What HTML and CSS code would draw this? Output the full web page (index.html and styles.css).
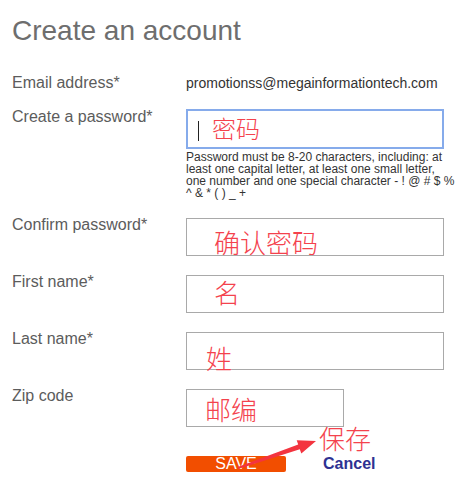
FILE: index.html
```html
<!DOCTYPE html>
<html>
<head>
<meta charset="utf-8">
<link rel="stylesheet" href="styles.css">
</head>
<body>
<div class="page">
  <h1 class="title">Create an account</h1>
  <div class="form">
    <div class="row row-email">
      <div class="label">Email address*</div>
      <div class="value">promotionss@megainformationtech.com</div>
    </div>
    <div class="row">
      <div class="label label-pw">Create a password*</div>
      <div class="field">
        <div class="input input-focus"><span class="caret"></span><span class="note note-pw">密码</span></div>
        <p class="help">Password must be 8-20 characters, including: at least one capital letter, at least one small letter, one number and one special character - ! @ # $ % ^ &amp; * ( ) _ +</p>
      </div>
    </div>
    <div class="row">
      <div class="label">Confirm password*</div>
      <div class="field">
        <div class="input"><span class="note note-confirm">确认密码</span></div>
      </div>
    </div>
    <div class="row">
      <div class="label">First name*</div>
      <div class="field">
        <div class="input"><span class="note note-first">名</span></div>
      </div>
    </div>
    <div class="row">
      <div class="label">Last name*</div>
      <div class="field">
        <div class="input"><span class="note note-last">姓</span></div>
      </div>
    </div>
    <div class="row">
      <div class="label">Zip code</div>
      <div class="field">
        <div class="input input-zip"><span class="note note-zip">邮编</span></div>
      </div>
    </div>
    <div class="row row-actions">
      <div class="label"></div>
      <div class="actions">
        <span class="btn-save">SAVE</span>
        <span class="btn-cancel">Cancel</span>
      </div>
    </div>
  </div>
  <span class="note note-save">保存</span>
  <svg class="arrow" width="82" height="36" viewBox="0 0 82 36">
    <polygon points="1.7,31 62.2,8.5 60.7,4.3 80,5 65.3,17.5 63.8,13.3 2.3,33" fill="#f3343f"/>
  </svg>
</div>
</body>
</html>
```

FILE: styles.css
```css
html, body {
  margin: 0;
  padding: 0;
  background: #ffffff;
}

.page {
  position: relative;
  width: 462px;
  height: 488px;
  padding-left: 12px;
  box-sizing: border-box;
  font-family: "Liberation Sans", Arial, sans-serif;
  overflow: hidden;
}

.title {
  margin: 15px 0 0 0;
  font-size: 28px;
  line-height: 32px;
  font-weight: normal;
  color: #6e6e6e;
}

.form {
  margin-top: 28px;
  display: flex;
  flex-direction: column;
  gap: 19px;
}

.row {
  display: flex;
  align-items: flex-start;
}

.row-email {
  margin-bottom: -1px;
  align-items: baseline;
}

.label {
  width: 174px;
  flex: none;
  font-size: 16px;
  line-height: 18px;
  color: #5c5c5c;
  margin-top: -2px;
}

.row-email .label {
  line-height: 15px;
  margin-top: 0;
}

.label-pw {
  margin-top: -1px;
}

.value {
  font-size: 14px;
  line-height: 15px;
  color: #333333;
}

.field {
  display: flex;
  flex-direction: column;
}

.input {
  position: relative;
  box-sizing: border-box;
  width: 258px;
  height: 38px;
  border: 1px solid #a9a9a9;
  background: #ffffff;
}

.input-focus {
  height: 40px;
  border: 2px solid #86abeb;
}

.input-zip {
  width: 158px;
}

.caret {
  position: absolute;
  left: 10px;
  top: 10px;
  width: 1px;
  height: 20px;
  background: #222222;
}

.help {
  margin: 2px 0 0 0;
  width: 270px;
  font-size: 12px;
  line-height: 12px;
  color: #333333;
}

.row-actions {
  margin-top: 10px;
}

.actions {
  display: flex;
  align-items: center;
}

.btn-save {
  display: block;
  width: 100px;
  height: 16px;
  line-height: 16px;
  border-radius: 2px;
  background: #f24e00;
  color: #ffffff;
  font-size: 16px;
  text-align: center;
}

.btn-cancel {
  margin-left: 37px;
  font-size: 16px;
  line-height: 16px;
  font-weight: bold;
  color: #2e3192;
}

.note {
  position: absolute;
  font-family: "Noto Sans CJK SC", sans-serif;
  font-weight: 300;
  font-size: 26px;
  line-height: 26px;
  color: #f4424d;
  white-space: nowrap;
}

.note-pw {
  font-size: 24px;
  line-height: 24px;
  left: 24px;
  top: 5px;
}

.note-confirm {
  left: 27px;
  top: 10px;
}

.note-first {
  left: 27px;
  top: 3px;
}

.note-last {
  left: 19px;
  top: 12px;
}

.note-zip {
  left: 18px;
  top: 6px;
}

.note-save {
  left: 319px;
  top: 428px;
  line-height: 20px;
}

.arrow {
  position: absolute;
  left: 236px;
  top: 436px;
}
```
